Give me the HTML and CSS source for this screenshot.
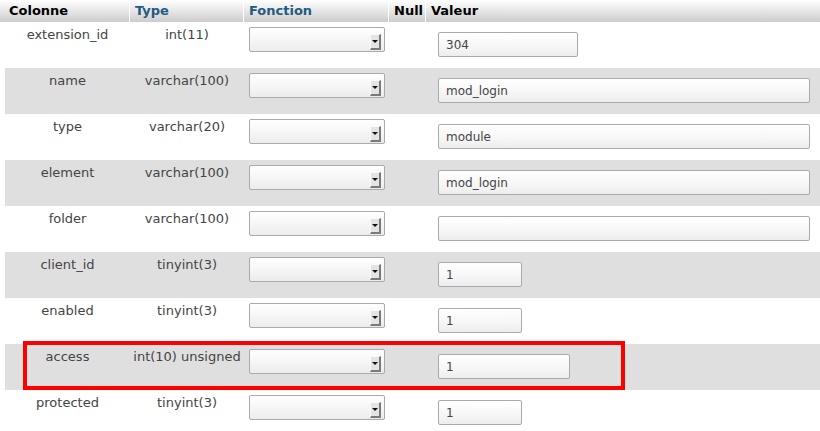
FILE: index.html
```html
<!DOCTYPE html>
<html lang="fr">
<head>
<meta charset="utf-8">
<title>Insertion</title>
<link rel="stylesheet" href="styles.css">
</head>
<body>
<div class="grid">
  <div class="head">
    <div class="th th-col">Colonne</div>
    <div class="th link">Type</div>
    <div class="th link">Fonction</div>
    <div class="th">Null</div>
    <div class="th last">Valeur</div>
  </div>

  <div class="row">
    <div class="cell">extension_id</div>
    <div class="cell">int(11)</div>
    <div class="fn"><div class="select"><span class="btn"></span></div></div>
    <div class="null"></div>
    <div class="val"><input class="inp w139" type="text" value="304"></div>
  </div>
  <div class="row odd">
    <div class="cell">name</div>
    <div class="cell">varchar(100)</div>
    <div class="fn"><div class="select"><span class="btn"></span></div></div>
    <div class="null"></div>
    <div class="val"><input class="inp wlong" type="text" value="mod_login"></div>
  </div>
  <div class="row">
    <div class="cell">type</div>
    <div class="cell">varchar(20)</div>
    <div class="fn"><div class="select"><span class="btn"></span></div></div>
    <div class="null"></div>
    <div class="val"><input class="inp wlong" type="text" value="module"></div>
  </div>
  <div class="row odd">
    <div class="cell">element</div>
    <div class="cell">varchar(100)</div>
    <div class="fn"><div class="select"><span class="btn"></span></div></div>
    <div class="null"></div>
    <div class="val"><input class="inp wlong" type="text" value="mod_login"></div>
  </div>
  <div class="row">
    <div class="cell">folder</div>
    <div class="cell">varchar(100)</div>
    <div class="fn"><div class="select"><span class="btn"></span></div></div>
    <div class="null"></div>
    <div class="val"><input class="inp wlong" type="text" value=""></div>
  </div>
  <div class="row odd">
    <div class="cell">client_id</div>
    <div class="cell">tinyint(3)</div>
    <div class="fn"><div class="select"><span class="btn"></span></div></div>
    <div class="null"></div>
    <div class="val"><input class="inp w84" type="text" value="1"></div>
  </div>
  <div class="row">
    <div class="cell">enabled</div>
    <div class="cell">tinyint(3)</div>
    <div class="fn"><div class="select"><span class="btn"></span></div></div>
    <div class="null"></div>
    <div class="val"><input class="inp w84" type="text" value="1"></div>
  </div>
  <div class="row odd marked">
    <div class="cell">access</div>
    <div class="cell">int(10) unsigned</div>
    <div class="fn"><div class="select"><span class="btn"></span></div></div>
    <div class="null"></div>
    <div class="val"><input class="inp w131" type="text" value="1"></div>
    <div class="highlight"></div>
  </div>
  <div class="row">
    <div class="cell">protected</div>
    <div class="cell">tinyint(3)</div>
    <div class="fn"><div class="select"><span class="btn"></span></div></div>
    <div class="null"></div>
    <div class="val"><input class="inp w84" type="text" value="1"></div>
  </div>
</div>
</body>
</html>
```

FILE: styles.css
```css
html, body {
  margin: 0;
  padding: 0;
  background: #fff;
  overflow: hidden;
}
body {
  width: 820px;
  height: 431px;
  font-family: "DejaVu Sans", Verdana, sans-serif;
  font-size: 13px;
  color: #444;
}
.grid {
  width: 820px;
}
.head {
  display: grid;
  grid-template-columns: 130px 114px 145px 37px 1fr;
  height: 22px;
  background: linear-gradient(to bottom, #ffffff 0%, #e6e6e6 50%, #cccccc 100%);
}
.th {
  font-weight: bold;
  color: #000;
  padding: 3px 0 0 5px;
  line-height: 15px;
  border-right: 1px solid #fff;
  box-sizing: border-box;
}
.th-col {
  padding-left: 9px;
}
.th.link {
  color: #235a81;
}
.th.last {
  border-right: none;
}
.row {
  display: grid;
  grid-template-columns: 125px 114px 145px 37px 1fr;
  height: 46px;
  margin-left: 5px;
  position: relative;
}
.row.odd {
  background: #dfdfdf;
}
.cell {
  text-align: center;
  padding-top: 5px;
  line-height: 16px;
  white-space: nowrap;
}
.fn {
  padding: 5px 0 0 5px;
}
.select {
  box-sizing: border-box;
  width: 136px;
  height: 25px;
  border: 1px solid #aaa;
  border-radius: 2px;
  background: linear-gradient(to bottom, #ffffff 0%, #f6f6f6 50%, #ececec 100%);
  display: flex;
  justify-content: flex-end;
  align-items: flex-end;
  padding: 0 3px 1px 0;
}
.btn {
  width: 11px;
  height: 16px;
  box-sizing: border-box;
  background: #e4e4e4;
  border-top: 1px solid #fafafa;
  border-left: 1px solid #fafafa;
  border-right: 2px solid #7a7a7a;
  border-bottom: 2px solid #7a7a7a;
  display: flex;
  justify-content: center;
  align-items: center;
}
.btn::after {
  content: "";
  width: 0;
  height: 0;
  border-left: 3px solid transparent;
  border-right: 3px solid transparent;
  border-top: 3px solid #111;
}
.val {
  padding: 10px 0 0 12px;
}
.inp {
  box-sizing: border-box;
  height: 25px;
  border: 1px solid #aaa;
  border-radius: 2px;
  background: linear-gradient(to bottom, #ffffff 0%, #f7f7f7 55%, #ededed 100%);
  font-family: "DejaVu Sans", Verdana, sans-serif;
  font-size: 12px;
  color: #444;
  padding: 0 0 0 7px;
  margin: 0;
  outline: none;
  display: block;
}
.w139 { width: 140px; }
.w131 { width: 132px; }
.w84 { width: 84px; }
.wlong { width: 372px; }
.highlight {
  position: absolute;
  left: 18px;
  top: -3px;
  width: 602px;
  height: 49px;
  box-sizing: border-box;
  border: 4px solid #ff0000;
  pointer-events: none;
}
```
